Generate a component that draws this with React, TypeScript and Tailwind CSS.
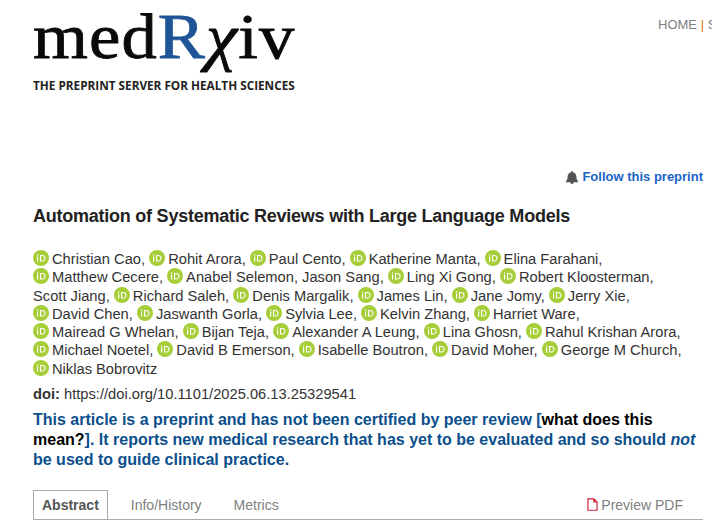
const AUTHOR_LINES: [string, boolean][][] = [
  [['Christian Cao', true], ['Rohit Arora', true], ['Paul Cento', true], ['Katherine Manta', true], ['Elina Farahani', true]],
  [['Matthew Cecere', true], ['Anabel Selemon', true], ['Jason Sang', false], ['Ling Xi Gong', true], ['Robert Kloosterman', true]],
  [['Scott Jiang', false], ['Richard Saleh', true], ['Denis Margalik', true], ['James Lin', true], ['Jane Jomy', true], ['Jerry Xie', true]],
  [['David Chen', true], ['Jaswanth Gorla', true], ['Sylvia Lee', true], ['Kelvin Zhang', true], ['Harriet Ware', true]],
  [['Mairead G Whelan', true], ['Bijan Teja', true], ['Alexander A Leung', true], ['Lina Ghosn', true], ['Rahul Krishan Arora', true]],
  [['Michael Noetel', true], ['David B Emerson', true], ['Isabelle Boutron', true], ['David Moher', true], ['George M Church', true]],
  [['Niklas Bobrovitz', true]],
];

function OrcidIcon() {
  return (
    <svg viewBox="0 0 16 16" className="inline-block w-4 h-4 align-[-2px] mr-[3px]">
      <circle cx="8" cy="8" r="8" fill="#a6ce39" />
      <rect x="4" y="6.6" width="1.2" height="5" fill="#fff" />
      <circle cx="4.6" cy="4.9" r="0.75" fill="#fff" />
      <path d="M7 4.9h2.3c2 0 3.3 1.5 3.3 3.35s-1.3 3.35-3.3 3.35H7z M8.1 5.9v4.7h1.2c1.4 0 2.2-1 2.2-2.35S10.700 5.900 9.300 5.900z" fill="#fff" fillRule="evenodd" />
    </svg>
  );
}

function Logo() {
  return (
    <div className="w-[264px]">
      <div className="h-[56px] leading-[46px] whitespace-nowrap text-[64px] tracking-[1px] origin-left scale-x-[1.103] text-[#0a0a0a] [-webkit-text-stroke:0.8px] font-['Liberation_Serif',serif]">
        med<span className="text-[#1f5496]">R</span>
        <span className="italic">χ</span>iv
      </div>
      <div className="mt-[9px] text-[11.750px] leading-3 font-bold whitespace-nowrap text-[#222] font-['Open_Sans',sans-serif]">
        THE PREPRINT SERVER FOR HEALTH SCIENCES
      </div>
    </div>
  );
}

export default function App() {
  return (
    <div className="w-[712px] h-[525px] overflow-hidden bg-white font-['Liberation_Sans',Arial,sans-serif] text-[#333] text-sm">
      {/* header */}
      <div className="flex justify-between pl-[33px] pt-[14px]">
        <Logo />
        <div className="pt-[2px] whitespace-nowrap text-[13px] text-[#808080] w-[54px] overflow-hidden">
          HOME <span className="text-[#e07b00]">|</span> SUBMIT
        </div>
      </div>

      {/* follow */}
      <div className="flex justify-end pr-[9px] mt-[78px] leading-4">
        <a className="flex items-center gap-[3px] font-bold text-[13px] text-[#1a63c4]">
          <svg viewBox="0 0 16 16" className="w-[14px] h-[14px]" fill="#555">
            <path d="M8 16a2 2 0 0 0 2-2H6a2 2 0 0 0 2 2zM8 1a1 1 0 0 1 1 1v.6c2.300.5 4 2.500 4 4.900 0 2.500.7 4 2 5.500v1H1v-1c1.300-1.500 2-3 2-5.500 0-2.400 1.700-4.400 4-4.900V2a1 1 0 0 1 1-1z" />
          </svg>
          Follow this preprint
        </a>
      </div>

      <div className="pl-[33px] pr-[9px]">
        <h1 className="mt-[19px] text-[18px] leading-6 font-bold text-[#222] tracking-[-0.24px] whitespace-nowrap">
          Automation of Systematic Reviews with Large Language Models
        </h1>

        <div className="mt-[22px] leading-[18.300px] text-[14.700px]">
          {AUTHOR_LINES.map((line, l) => (
            <div key={l} className="whitespace-nowrap">
              {line.map(([name, orcid], i) => (
                <span key={name}>
                  {orcid && <OrcidIcon />}
                  {name}
                  {l === AUTHOR_LINES.length - 1 && i === line.length - 1 ? '' : ', '}
                </span>
              ))}
            </div>
          ))}
        </div>

        <div className="mt-[7px] leading-[18px] text-[14.700px]">
          <span className="font-bold">doi:</span> https://doi.org/10.1101/2025.06.13.25329541
        </div>

        <p className="mt-[7px] text-[16px] leading-[20px] font-bold text-[#0b4f8c]">
          This article is a preprint and has not been certified by peer review [
          <span className="text-black">what does this mean?</span>]. It reports new medical
          research that has yet to be evaluated and so should <em>not</em> be used to guide clinical
          practice.
        </p>

        {/* tabs */}
        <div className="mt-[20px] flex items-end justify-between border-b border-[#aaa] pr-5">
          <div className="flex h-[29px]">
            <div className="px-2 flex items-center font-bold border border-b-0 border-[#aaa] text-[#555]">
              Abstract
            </div>
            <div className="ml-[23px] flex items-center text-[#808080]">Info/History</div>
            <div className="ml-[32px] flex items-center text-[#808080]">Metrics</div>
          </div>
          <div className="flex h-[29px] items-center text-[#808080] gap-[3px]">
            <svg viewBox="0 0 12 14" className="w-[11px] h-[13px]" fill="none" stroke="#c8213a" strokeWidth="1.300">
              <path d="M1 .8h6.500L11 4.300v9H1zM7.500.8v3.500H11" />
            </svg>
            Preview PDF
          </div>
        </div>
      </div>
    </div>
  );
}
